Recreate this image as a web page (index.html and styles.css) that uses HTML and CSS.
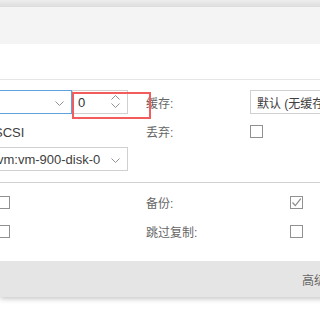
FILE: index.html
```html
<!DOCTYPE html>
<html lang="zh">
<head>
    <meta charset="UTF-8">
    <title>添加: 硬盘</title>
    <link rel="stylesheet" href="styles.css">
</head>
<body>
    <div id="window">
        <div class="titleEdge"></div>
        <div class="tabBar"></div>
        <div class="tabStrip"></div>
        <div class="form">
            <div class="cols">
                <div class="col leftCol">
                    <div class="row first">
                        <div class="combo bus focused">
                            <span class="value"></span>
                            <svg class="chevron" width="9" height="5" viewBox="0 0 9 5"><path d="M0.5 0.5 L4.5 4.5 L8.5 0.5" fill="none" stroke="#919191"/></svg>
                        </div>
                        <div class="spinner">
                            <span class="value num">0</span>
                            <div class="spinArrows">
                                <svg width="9" height="5" viewBox="0 0 9 5"><path d="M0.5 4.5 L4.5 0.5 L8.5 4.5" fill="none" stroke="#919191"/></svg>
                                <svg width="9" height="5" viewBox="0 0 9 5"><path d="M0.5 0.5 L4.5 4.5 L8.5 0.5" fill="none" stroke="#919191"/></svg>
                            </div>
                        </div>
                    </div>
                    <div class="row second">
                        <span class="display">SCSI</span>
                    </div>
                    <div class="row">
                        <div class="combo disk">
                            <span class="value">vm:vm-900-disk-0</span>
                            <svg class="chevron" width="9" height="5" viewBox="0 0 9 5"><path d="M0.5 0.5 L4.5 4.5 L8.5 0.5" fill="none" stroke="#919191"/></svg>
                        </div>
                    </div>
                </div>
                <div class="col rightCol">
                    <div class="row first">
                        <div class="label"><span class="cjk">缓存:</span></div>
                        <div class="combo cache">
                            <span class="value"><span class="cjk">默认 (无缓存)</span></span>
                        </div>
                    </div>
                    <div class="row second">
                        <div class="label"><span class="cjk">丢弃:</span></div>
                        <span class="check"></span>
                    </div>
                </div>
            </div>
            <div class="separator"></div>
            <div class="cols">
                <div class="col leftCol">
                    <div class="row first">
                        <span class="check leftCheck"></span>
                    </div>
                    <div class="row">
                        <span class="check leftCheck"></span>
                    </div>
                </div>
                <div class="col rightCol">
                    <div class="row first">
                        <div class="label wide"><span class="cjk">备份:</span></div>
                        <span class="check checked">
                            <svg width="11" height="11" viewBox="0 0 11 11"><path d="M1.5 5.5 L4.3 8.6 L9.8 1.6" fill="none" stroke="#8a8a8a" stroke-width="1.2"/></svg>
                        </span>
                    </div>
                    <div class="row">
                        <div class="label wide"><span class="cjk">跳过复制:</span></div>
                        <span class="check"></span>
                    </div>
                </div>
            </div>
        </div>
        <div class="footer">
            <span class="footerText cjk">高级</span>
        </div>
    </div>
    <div class="highlight"></div>
</body>
</html>
```

FILE: styles.css
```css
* {
    margin: 0;
    padding: 0;
    box-sizing: border-box;
}
body {
    background-color: white;
    font-family: 'Liberation Sans', 'Noto Sans CJK SC', sans-serif;
    font-size: 13px;
    color: #404040;
    overflow: hidden;
    width: 320px;
    height: 320px;
    position: relative;
}
.cjk {
    font-size: 12px;
}
#window {
    width: 340px;
    background-color: white;
    box-shadow: 0 2px 5px rgba(0, 0, 0, 0.22);
}
.titleEdge {
    height: 7px;
    background: linear-gradient(#eeeeee, #dcdcdc);
}
.tabBar {
    height: 37px;
    background-color: #f4f4f4;
}
.tabStrip {
    height: 36px;
    background-color: white;
    border-bottom: 1px solid #e6e6e6;
}
.form {
    margin-left: -10px;
    padding-top: 10px;
    padding-bottom: 14px;
}
.cols {
    display: flex;
}
.leftCol {
    width: 138px;
}
.rightCol {
    margin-left: 18px;
    flex: 1;
}
.row {
    height: 24px;
    display: flex;
    align-items: center;
    margin-bottom: 4px;
}
.row.first {
    margin-bottom: 5px;
}
.label {
    width: 104px;
    color: #666666;
    white-space: nowrap;
}
.label.wide {
    width: 144px;
}
.combo, .spinner {
    height: 24px;
    border: 1px solid #d0d0d0;
    display: flex;
    align-items: center;
    padding-left: 6px;
    position: relative;
    white-space: nowrap;
}
.combo.focused {
    border-color: #5fa2dd;
}
.bus {
    width: 82px;
}
.spinner {
    width: 56px;
    padding-left: 5px;
}
.disk {
    width: 138px;
}
.cache {
    width: 160px;
}
.chevron {
    position: absolute;
    right: 7px;
    top: 10px;
}
.num {
    color: #333333;
}
.spinArrows {
    position: absolute;
    right: 7px;
    top: 4px;
    display: flex;
    flex-direction: column;
    gap: 3px;
}
.spinArrows svg {
    display: block;
}
.display {
    padding-left: 4px;
    padding-top: 2px;
}
.check {
    width: 13px;
    height: 13px;
    border: 1px solid #919191;
    background-color: white;
    display: flex;
    align-items: center;
    justify-content: center;
}
.leftCheck {
    margin-left: 7px;
}
.separator {
    height: 1px;
    background-color: #d0d0d0;
    margin-top: 7px;
    margin-bottom: 7px;
}
.footer {
    height: 36px;
    background-color: #e5e5e5;
    display: flex;
    align-items: center;
    padding-left: 302px;
}
.footerText {
    color: #666666;
    white-space: nowrap;
}
.highlight {
    position: absolute;
    left: 72px;
    top: 92px;
    width: 79px;
    height: 27px;
    border: 2px solid #f25c5c;
}
```
